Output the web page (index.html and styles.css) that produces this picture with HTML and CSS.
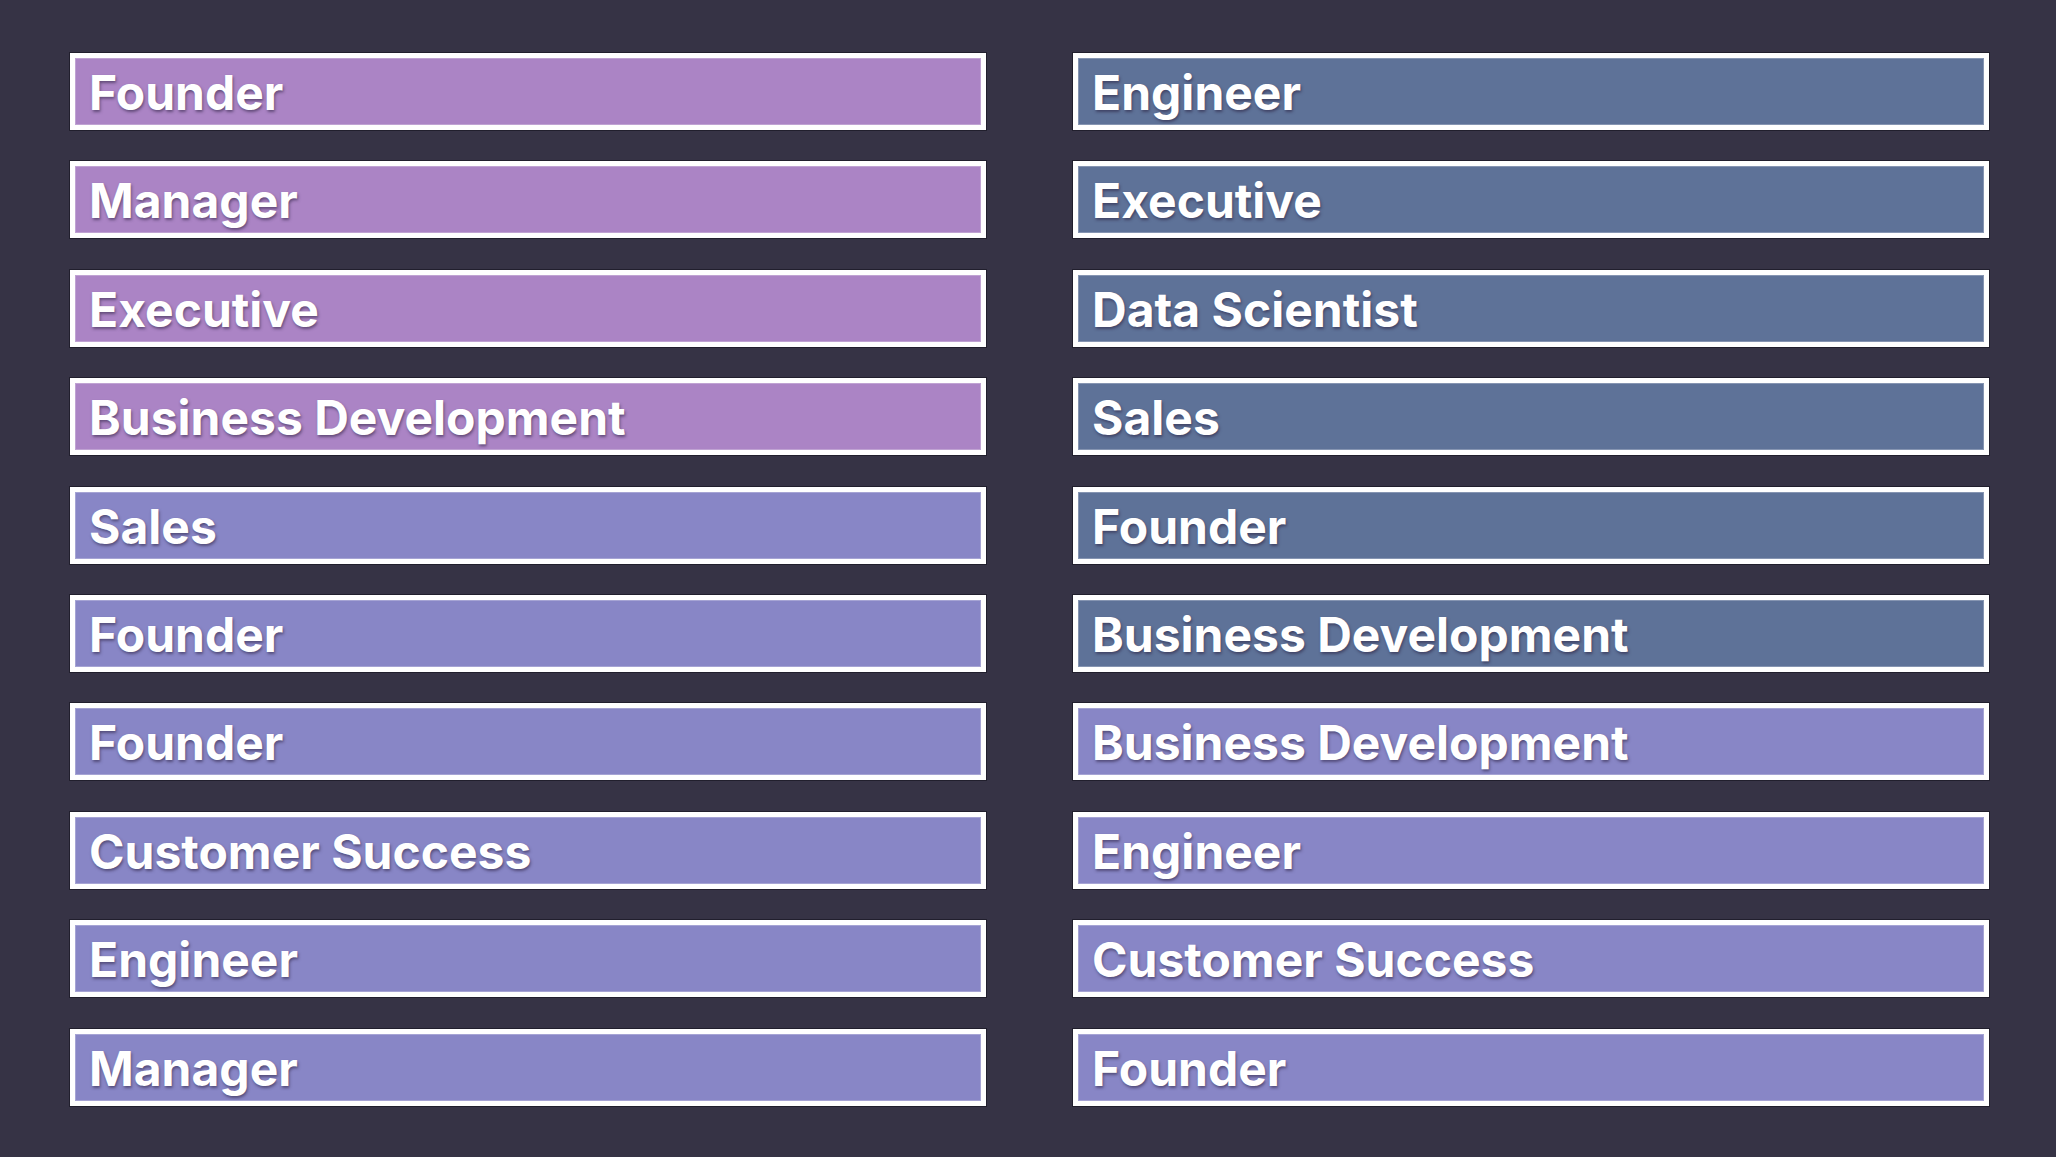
FILE: index.html
```html
<!DOCTYPE html>
<html lang="en">
<head>
    <meta charset="UTF-8">
    <meta name="viewport" content="width=device-width, initial-scale=1.0">
    <title>Roles</title>
    <link rel="stylesheet" href="styles.css">
</head>
<body>
    <div class="role-grid">
        <div class="role-col">
            <div class="role-box purple">Founder</div>
            <div class="role-box purple">Manager</div>
            <div class="role-box purple">Executive</div>
            <div class="role-box purple">Business Development</div>
            <div class="role-box violet">Sales</div>
            <div class="role-box violet">Founder</div>
            <div class="role-box violet">Founder</div>
            <div class="role-box violet">Customer Success</div>
            <div class="role-box violet">Engineer</div>
            <div class="role-box violet">Manager</div>
        </div>
        <div class="role-col">
            <div class="role-box slate">Engineer</div>
            <div class="role-box slate">Executive</div>
            <div class="role-box slate">Data Scientist</div>
            <div class="role-box slate">Sales</div>
            <div class="role-box slate">Founder</div>
            <div class="role-box slate">Business Development</div>
            <div class="role-box violet">Business Development</div>
            <div class="role-box violet">Engineer</div>
            <div class="role-box violet">Customer Success</div>
            <div class="role-box violet">Founder</div>
        </div>
    </div>
</body>
</html>
```

FILE: styles.css
```css
body {
    margin: 0;
    background-color: #363345;
    font-family: Inter, "Noto Sans", sans-serif;
    min-height: 100vh;
}
.role-grid {
    display: flex;
    gap: 87px;
    padding: 53px 0 0 70px;
}
.role-col {
    display: flex;
    flex-direction: column;
    gap: 31.4px;
    width: 916px;
}
.role-box {
    box-sizing: border-box;
    height: 77px;
    border: 5px solid #ffffff;
    box-shadow: 0 0 0 1px rgba(20, 18, 30, 0.6), inset 0 0 0 1px rgba(255, 255, 255, 0.25);
    display: flex;
    align-items: center;
    padding: 2px 0 0 14px;
    color: #ffffff;
    font-weight: 700;
    font-size: 48px;
    text-shadow: 1px 2px 3px rgba(40, 30, 60, 0.55);
    white-space: nowrap;
}
.purple {
    background-color: #ab84c5;
}
.violet {
    background-color: #8886c6;
}
.slate {
    background-color: #5e7298;
}
```
